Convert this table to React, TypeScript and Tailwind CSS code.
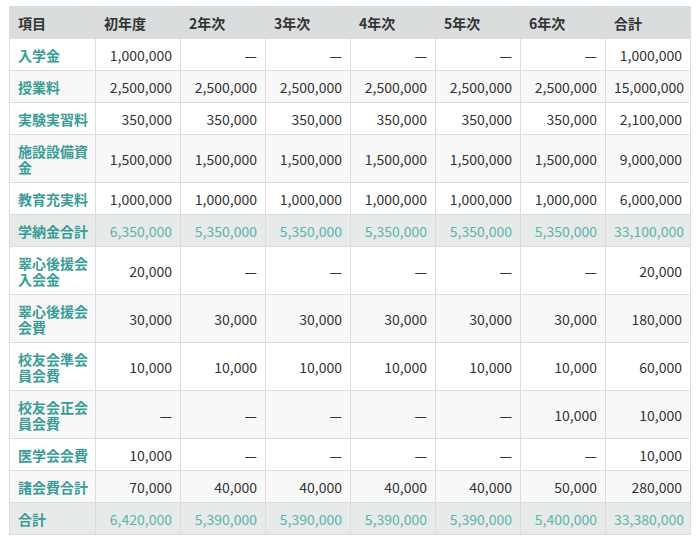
const header = ["項目", "初年度", "2年次", "3年次", "4年次", "5年次", "6年次", "合計"];

type Row = { label: string; values: string[]; total?: boolean };

const D = "—";

const rows: Row[] = [
  { label: "入学金", values: ["1,000,000", D, D, D, D, D, "1,000,000"] },
  { label: "授業料", values: ["2,500,000", "2,500,000", "2,500,000", "2,500,000", "2,500,000", "2,500,000", "15,000,000"] },
  { label: "実験実習料", values: ["350,000", "350,000", "350,000", "350,000", "350,000", "350,000", "2,100,000"] },
  { label: "施設設備資金", values: ["1,500,000", "1,500,000", "1,500,000", "1,500,000", "1,500,000", "1,500,000", "9,000,000"] },
  { label: "教育充実料", values: ["1,000,000", "1,000,000", "1,000,000", "1,000,000", "1,000,000", "1,000,000", "6,000,000"] },
  { label: "学納金合計", values: ["6,350,000", "5,350,000", "5,350,000", "5,350,000", "5,350,000", "5,350,000", "33,100,000"], total: true },
  { label: "翠心後援会入会金", values: ["20,000", D, D, D, D, D, "20,000"] },
  { label: "翠心後援会会費", values: ["30,000", "30,000", "30,000", "30,000", "30,000", "30,000", "180,000"] },
  { label: "校友会準会員会費", values: ["10,000", "10,000", "10,000", "10,000", "10,000", "10,000", "60,000"] },
  { label: "校友会正会員会費", values: [D, D, D, D, D, "10,000", "10,000"] },
  { label: "医学会会費", values: ["10,000", D, D, D, D, D, "10,000"] },
  { label: "諸会費合計", values: ["70,000", "40,000", "40,000", "40,000", "40,000", "50,000", "280,000"] },
  { label: "合計", values: ["6,420,000", "5,390,000", "5,390,000", "5,390,000", "5,390,000", "5,400,000", "33,380,000"], total: true },
];

export default function App() {
  return (
    <div
      className="w-[700px] h-[539px] bg-white pt-[6px] pl-[9px] text-[#333]"
      style={{ fontFamily: '"Noto Sans CJK JP", "Noto Sans", sans-serif' }}
    >
      <table className="w-[681px] table-fixed border-collapse text-[14px] leading-[16px]">
        <colgroup>
          <col className="w-[86px]" />
          {header.slice(1).map((h) => (
            <col key={h} className="w-[85px]" />
          ))}
        </colgroup>
        <thead>
          <tr className="bg-[#d9dddd]">
            {header.map((h) => (
              <th
                key={h}
                className="border border-[#dcdcdc] pl-2 pr-1 pt-2 pb-[7px] text-left font-bold text-[#333]"
              >
                {h}
              </th>
            ))}
          </tr>
        </thead>
        <tbody>
          {rows.map((r, i) => (
            <tr
              key={r.label}
              className={r.total ? "bg-[#e6ebea]" : i % 2 === 1 ? "bg-[#f8f8f8]" : "bg-white"}
            >
              <th className="border border-[#dcdcdc] pl-2 pr-0 pt-2 pb-[7px] text-left font-bold text-[#3a9c96] break-all">
                {r.label}
              </th>
              {r.values.map((v, j) => (
                <td
                  key={j}
                  className={
                    "border border-[#dcdcdc] px-2 pt-2 pb-[7px] text-right whitespace-nowrap " +
                    (r.total ? "text-[#5cb2ac]" : "text-[#333]")
                  }
                >
                  {v}
                </td>
              ))}
            </tr>
          ))}
        </tbody>
      </table>
    </div>
  );
}
